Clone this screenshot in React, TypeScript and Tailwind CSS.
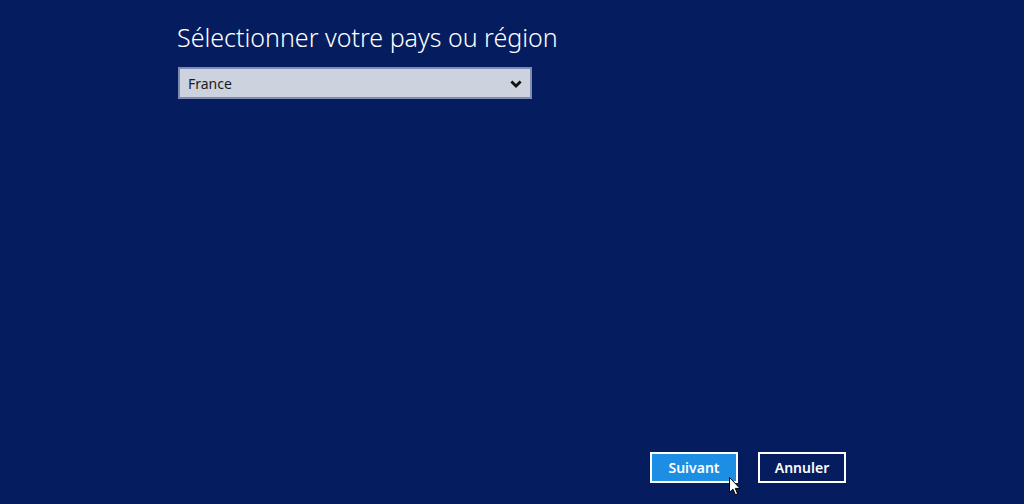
import { useState } from 'react'

const countries = ['France', 'Belgique', 'Canada', 'Suisse', 'Luxembourg']

export default function App() {
  const [country, setCountry] = useState('France')

  return (
    <div className="relative flex h-[504px] w-full flex-col justify-between bg-[#051d5e] pb-[21px] pl-[177px] pr-[178px] pt-[19px] font-['Segoe_UI','Noto_Sans','Open_Sans',sans-serif] text-white">
      <div>
        <h1 className="text-[25px] font-light leading-[36px]">
          Sélectionner votre pays ou région
        </h1>

        <div className="relative ml-px mt-[12px] h-[32px] w-[354px] border-2 border-[#7f8bb3] bg-[#cdd2df]">
          <select
            value={country}
            onChange={(event) => setCountry(event.target.value)}
            className="h-full w-full appearance-none bg-transparent pl-[8px] text-[14px] text-[#1b1b1b] outline-none"
          >
            {countries.map((name) => (
              <option key={name} value={name}>
                {name}
              </option>
            ))}
          </select>
          <svg
            viewBox="0 0 12 8"
            className="pointer-events-none absolute right-[8px] top-[11px] h-[8px] w-[12px]"
          >
            <path d="M1.4 1.4 L6 6 L10.6 1.4" fill="none" stroke="#111" strokeWidth="2.8" />
          </svg>
        </div>
      </div>

      <div className="flex justify-end gap-[20px]">
        <button
          type="button"
          className="h-[31px] w-[88px] border-2 border-white bg-[#1c8ee3] text-[14px] font-semibold text-white"
        >
          Suivant
        </button>
        <button
          type="button"
          className="h-[31px] w-[88px] border-2 border-white bg-[#051d5e] text-[14px] font-semibold text-white"
        >
          Annuler
        </button>
      </div>

      {/* mouse pointer */}
      <svg
        viewBox="0 0 12 19"
        className="absolute left-[729px] top-[477px] h-[19px] w-[12px]"
      >
        <path
          d="M0.5 0.5 L0.5 15.5 L4 12.2 L6.4 17.8 L8.6 16.8 L6.3 11.4 L11 11.4 Z"
          fill="#fff"
          stroke="#000"
          strokeWidth="1"
        />
      </svg>
    </div>
  )
}
